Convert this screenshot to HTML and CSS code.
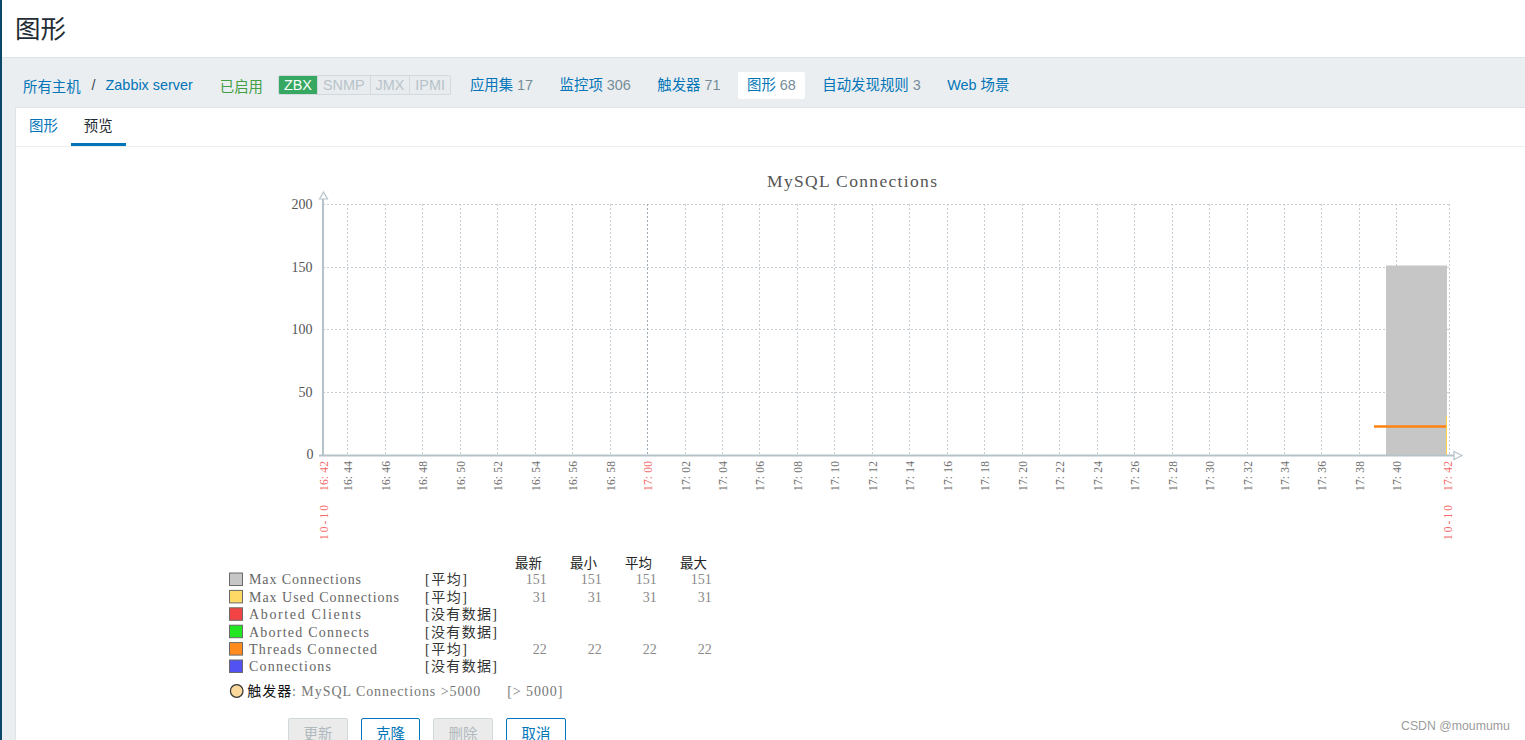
FILE: index.html
```html
<!DOCTYPE html>
<html lang="zh-CN">
<head>
<meta charset="utf-8">
<title>图形</title>
<link rel="stylesheet" href="styles.css">
</head>
<body>
<div class="sidebar-edge"></div>
<div class="main">
  <header class="page-header"><h1>图形</h1></header>
  <nav class="host-nav">
    <ul class="breadcrumbs">
      <li><a>所有主机</a></li>
      <li class="sep">/</li>
      <li><a>Zabbix server</a></li>
    </ul>
    <span class="status-on">已启用</span>
    <span class="avail"><span class="av av-on">ZBX</span><span class="av">SNMP</span><span class="av">JMX</span><span class="av">IPMI</span></span>
    <ul class="host-links">
      <li><a>应用集</a> <span class="cnt">17</span></li>
      <li><a>监控项</a> <span class="cnt">306</span></li>
      <li><a>触发器</a> <span class="cnt">71</span></li>
      <li class="current"><a>图形</a> <span class="cnt">68</span></li>
      <li><a>自动发现规则</a> <span class="cnt">3</span></li>
      <li><a>Web 场景</a></li>
    </ul>
  </nav>
  <div class="content">
    <ul class="tabs">
      <li><a>图形</a></li>
      <li class="active">预览</li>
    </ul>
    <div class="preview">
      <svg class="graph" width="1260" height="550" viewBox="220 160 1260 550" xmlns="http://www.w3.org/2000/svg">
        <text class="g-title" x="767" y="187" textLength="170" lengthAdjust="spacing">MySQL Connections</text>

        <g class="grid">
          <line x1="323" y1="204.5" x2="1449" y2="204.5"/>
          <line x1="323" y1="267.5" x2="1449" y2="267.5"/>
          <line x1="323" y1="329.5" x2="1449" y2="329.5"/>
          <line x1="323" y1="392.5" x2="1449" y2="392.5"/>
          <line x1="1449.5" y1="204" x2="1449.5" y2="455"/>
          <line x1="347.5" y1="204" x2="347.5" y2="455"/>
          <line x1="385.5" y1="204" x2="385.5" y2="455"/>
          <line x1="422.5" y1="204" x2="422.5" y2="455"/>
          <line x1="460.5" y1="204" x2="460.5" y2="455"/>
          <line x1="497.5" y1="204" x2="497.5" y2="455"/>
          <line x1="535.5" y1="204" x2="535.5" y2="455"/>
          <line x1="572.5" y1="204" x2="572.5" y2="455"/>
          <line x1="610.5" y1="204" x2="610.5" y2="455"/>
          <line class="grid-major" x1="647.5" y1="204" x2="647.5" y2="455"/>
          <line x1="685.5" y1="204" x2="685.5" y2="455"/>
          <line x1="722.5" y1="204" x2="722.5" y2="455"/>
          <line x1="759.5" y1="204" x2="759.5" y2="455"/>
          <line x1="797.5" y1="204" x2="797.5" y2="455"/>
          <line x1="834.5" y1="204" x2="834.5" y2="455"/>
          <line x1="872.5" y1="204" x2="872.5" y2="455"/>
          <line x1="909.5" y1="204" x2="909.5" y2="455"/>
          <line x1="947.5" y1="204" x2="947.5" y2="455"/>
          <line x1="984.5" y1="204" x2="984.5" y2="455"/>
          <line x1="1022.5" y1="204" x2="1022.5" y2="455"/>
          <line x1="1059.5" y1="204" x2="1059.5" y2="455"/>
          <line x1="1097.5" y1="204" x2="1097.5" y2="455"/>
          <line x1="1134.5" y1="204" x2="1134.5" y2="455"/>
          <line x1="1172.5" y1="204" x2="1172.5" y2="455"/>
          <line x1="1209.5" y1="204" x2="1209.5" y2="455"/>
          <line x1="1247.5" y1="204" x2="1247.5" y2="455"/>
          <line x1="1284.5" y1="204" x2="1284.5" y2="455"/>
          <line x1="1321.5" y1="204" x2="1321.5" y2="455"/>
          <line x1="1359.5" y1="204" x2="1359.5" y2="455"/>
          <line x1="1396.5" y1="204" x2="1396.5" y2="455"/>
        </g>

        <rect class="s-maxconn" x="1386" y="265.5" width="61" height="189.5"/>
        <line class="s-threads" x1="1374" y1="426.5" x2="1447" y2="426.5"/>
        <line class="s-maxused" x1="1446.5" y1="416" x2="1446.5" y2="455"/>

        <g class="axes">
          <line x1="323" y1="198" x2="323" y2="456"/>
          <line x1="319" y1="455.5" x2="1454" y2="455.5"/>
          <polygon class="arrow" points="323.5,192 319.5,199 327.5,199"/>
          <polygon class="arrow" points="1462,455.5 1454,451.5 1454,459.5"/>
        </g>

        <g class="yl">
          <text x="291.5" y="209">200</text>
          <text x="291.5" y="272">150</text>
          <text x="291.5" y="334">100</text>
          <text x="298.5" y="396.5">50</text>
          <text x="306.5" y="459">0</text>
        </g>

        <g class="xl">
          <text transform="translate(351.5,491) rotate(-90)" textLength="30">16: 44</text>
          <text transform="translate(389.5,491) rotate(-90)" textLength="30">16: 46</text>
          <text transform="translate(426.5,491) rotate(-90)" textLength="30">16: 48</text>
          <text transform="translate(464.5,491) rotate(-90)" textLength="30">16: 50</text>
          <text transform="translate(501.5,491) rotate(-90)" textLength="30">16: 52</text>
          <text transform="translate(539.5,491) rotate(-90)" textLength="30">16: 54</text>
          <text transform="translate(576.5,491) rotate(-90)" textLength="30">16: 56</text>
          <text transform="translate(614.5,491) rotate(-90)" textLength="30">16: 58</text>
          <text class="xl-red" transform="translate(651.5,491) rotate(-90)" textLength="30">17: 00</text>
          <text transform="translate(689.5,491) rotate(-90)" textLength="30">17: 02</text>
          <text transform="translate(726.5,491) rotate(-90)" textLength="30">17: 04</text>
          <text transform="translate(763.5,491) rotate(-90)" textLength="30">17: 06</text>
          <text transform="translate(801.5,491) rotate(-90)" textLength="30">17: 08</text>
          <text transform="translate(838.5,491) rotate(-90)" textLength="30">17: 10</text>
          <text transform="translate(876.5,491) rotate(-90)" textLength="30">17: 12</text>
          <text transform="translate(913.5,491) rotate(-90)" textLength="30">17: 14</text>
          <text transform="translate(951.5,491) rotate(-90)" textLength="30">17: 16</text>
          <text transform="translate(988.5,491) rotate(-90)" textLength="30">17: 18</text>
          <text transform="translate(1026.5,491) rotate(-90)" textLength="30">17: 20</text>
          <text transform="translate(1063.5,491) rotate(-90)" textLength="30">17: 22</text>
          <text transform="translate(1101.5,491) rotate(-90)" textLength="30">17: 24</text>
          <text transform="translate(1138.5,491) rotate(-90)" textLength="30">17: 26</text>
          <text transform="translate(1176.5,491) rotate(-90)" textLength="30">17: 28</text>
          <text transform="translate(1213.5,491) rotate(-90)" textLength="30">17: 30</text>
          <text transform="translate(1251.5,491) rotate(-90)" textLength="30">17: 32</text>
          <text transform="translate(1288.5,491) rotate(-90)" textLength="30">17: 34</text>
          <text transform="translate(1325.5,491) rotate(-90)" textLength="30">17: 36</text>
          <text transform="translate(1363.5,491) rotate(-90)" textLength="30">17: 38</text>
          <text transform="translate(1400.5,491) rotate(-90)" textLength="30">17: 40</text>
          <text class="xl-red" transform="translate(327.5,491) rotate(-90)" textLength="30">16: 42</text>
          <text class="xl-red" transform="translate(327.5,540) rotate(-90)" textLength="35">10-10</text>
          <text class="xl-red" transform="translate(1451.5,491) rotate(-90)" textLength="30">17: 42</text>
          <text class="xl-red" transform="translate(1451.5,540) rotate(-90)" textLength="35">10-10</text>
        </g>

        <g class="lg-head">
          <text x="515" y="567.5">最新</text>
          <text x="570" y="567.5">最小</text>
          <text x="625" y="567.5">平均</text>
          <text x="680" y="567.5">最大</text>
        </g>

        <g class="lg-box">
          <rect class="c-gray" x="229.5" y="573" width="13" height="12.5"/>
          <rect class="c-yellow" x="229.5" y="590.4" width="13" height="12.5"/>
          <rect class="c-red" x="229.5" y="607.8" width="13" height="12.5"/>
          <rect class="c-green" x="229.5" y="625.2" width="13" height="12.5"/>
          <rect class="c-orange" x="229.5" y="642.6" width="13" height="12.5"/>
          <rect class="c-blue" x="229.5" y="660" width="13" height="12.5"/>
        </g>

        <g class="lg-name">
          <text x="249" y="584.3" textLength="112">Max Connections</text>
          <text x="249" y="601.7" textLength="150">Max Used Connections</text>
          <text x="249" y="619.1" textLength="112">Aborted Clients</text>
          <text x="249" y="636.5" textLength="120">Aborted Connects</text>
          <text x="249" y="653.9" textLength="128">Threads Connected</text>
          <text x="249" y="671.3" textLength="82">Connections</text>
        </g>

        <g class="lg-func">
          <text x="425" y="584.3" textLength="42">[平均]</text>
          <text x="425" y="601.7" textLength="42">[平均]</text>
          <text x="425" y="619.1" textLength="72">[没有数据]</text>
          <text x="425" y="636.5" textLength="72">[没有数据]</text>
          <text x="425" y="653.9" textLength="42">[平均]</text>
          <text x="425" y="671.3" textLength="72">[没有数据]</text>
        </g>

        <g class="lg-val">
          <text x="546.7" y="584.3">151</text>
          <text x="601.7" y="584.3">151</text>
          <text x="656.7" y="584.3">151</text>
          <text x="711.7" y="584.3">151</text>
          <text x="546.7" y="601.7">31</text>
          <text x="601.7" y="601.7">31</text>
          <text x="656.7" y="601.7">31</text>
          <text x="711.7" y="601.7">31</text>
          <text x="546.7" y="653.9">22</text>
          <text x="601.7" y="653.9">22</text>
          <text x="656.7" y="653.9">22</text>
          <text x="711.7" y="653.9">22</text>
        </g>

        <circle class="trig-dot" cx="236.7" cy="691" r="6.3"/>
        <text class="lg-trig" x="247.3" y="695.5" textLength="233"><tspan class="lg-trig-label">触发器</tspan>: MySQL Connections &gt;5000</text>
        <text class="lg-trig" x="507.3" y="695.5" textLength="55">[&gt; 5000]</text>
      </svg>
    </div>
    <div class="form-buttons">
      <button class="btn" disabled>更新</button>
      <button class="btn btn-alt narrow">克隆</button>
      <button class="btn" disabled>删除</button>
      <button class="btn btn-alt">取消</button>
    </div>
  </div>
</div>
<div class="watermark">CSDN @moumumu</div>
</body>
</html>
```

FILE: styles.css
```css
html, body {
  margin: 0;
  height: 100%;
  overflow: hidden;
}

body {
  display: flex;
  background: #ebeef0;
  font-family: "Liberation Sans", "Noto Sans CJK SC", Arial, sans-serif;
  font-size: 14.4px;
  color: #1f2c33;
}

a {
  color: #0275b8;
  text-decoration: none;
}

ul {
  list-style: none;
  margin: 0;
  padding: 0;
}

.sidebar-edge {
  flex: none;
  width: 2px;
  background: #0b466b;
}

.main {
  flex: 1;
  min-width: 0;
  display: flex;
  flex-direction: column;
}

/* header */
.page-header {
  flex: none;
  height: 58px;
  box-sizing: border-box;
  background: #fff;
  border-bottom: 1px solid #dfe4e7;
  padding: 2px 0 0 13px;
}

.page-header h1 {
  margin: 0;
  font-size: 25.5px;
  font-weight: normal;
  line-height: 55px;
  color: #1f2c33;
}

/* host navigation */
.host-nav {
  flex: none;
  height: 49px;
  box-sizing: border-box;
  padding: 5px 0 0 21px;
  display: flex;
  align-items: center;
  white-space: nowrap;
}

.breadcrumbs {
  display: flex;
  align-items: center;
}

.breadcrumbs .sep {
  margin: 0 10px 0 11px;
  color: #3b4a52;
}

.status-on {
  margin-left: 27px;
  color: #429e47;
}

.avail {
  margin-left: 15px;
  display: inline-flex;
  height: 20px;
  border: 1px solid #d3dadf;
  border-radius: 2px;
  box-sizing: border-box;
  overflow: hidden;
}

.av {
  padding: 0 5px;
  line-height: 18px;
  color: #b7c3ca;
  background: #e9ecee;
  border-left: 1px solid #d3dadf;
}

.av-on {
  border-left: none;
  background: #37a862;
  color: #fff;
}

.host-links {
  margin-left: 10px;
  display: flex;
  align-items: center;
}

.host-links li {
  padding: 0 9px;
  height: 27px;
  line-height: 27px;
  border-radius: 2px;
}

.host-links li + li {
  margin-left: 8.5px;
}

.host-links li.current {
  background: #fff;
}

.cnt {
  color: #768d99;
}

/* content box */
.content {
  flex: 1;
  margin-left: 13px;
  background: #fff;
  border-top: 1px solid #dfe4e7;
  border-left: 1px solid #dfe4e7;
}

.tabs {
  display: flex;
  height: 39px;
  box-sizing: border-box;
  border-bottom: 1px solid #ebeef0;
}

.tabs li {
  height: 38px;
  box-sizing: border-box;
  padding: 8px 13px 0;
  line-height: 20px;
  border-bottom: 3px solid transparent;
}

.tabs li.active {
  border-bottom-color: #0275b8;
  color: #1f2c33;
}

.preview {
  padding-top: 13px;
}

.graph {
  display: block;
  margin-left: 204px;
}

/* graph styles */
.g-title {
  font-family: "Liberation Serif", serif;
  font-size: 17.5px;
  fill: #555;
}

.grid line {
  stroke: #c6ced3;
  stroke-width: 1;
  stroke-dasharray: 2 2;
}

.grid .grid-major {
  stroke: #9eaab2;
}

.s-maxconn {
  fill: #c6c6c6;
}

.s-threads {
  stroke: #ff8214;
  stroke-width: 2.5;
}

.s-maxused {
  stroke: #ffd24a;
  stroke-width: 1;
}

.axes line {
  stroke: #b6c2ca;
  stroke-width: 2;
}

.axes .arrow {
  fill: #fff;
  stroke: #b6c2ca;
  stroke-width: 1.2;
}

.yl text {
  font-family: "Liberation Serif", serif;
  font-size: 14px;
  fill: #555;
}

.xl text {
  font-family: "Liberation Serif", serif;
  font-size: 11.5px;
  fill: #6e6e6e;
}

.xl .xl-red {
  fill: #f36a6a;
}

.lg-head text {
  font-family: "Noto Sans CJK SC", sans-serif;
  font-size: 13.5px;
  font-weight: normal;
  fill: #222;
}

.lg-box rect {
  stroke: #6a6a6a;
  stroke-width: 1;
}

.c-gray { fill: #c6c6c6; }
.c-yellow { fill: #ffd966; }
.c-red { fill: #f24444; }
.c-green { fill: #22e622; }
.c-orange { fill: #ff8a1e; }
.c-blue { fill: #5252f2; }

.lg-name text {
  font-family: "Liberation Serif", serif;
  font-size: 14px;
  fill: #666;
}

.lg-func text {
  font-family: "Liberation Serif", "Noto Sans CJK SC", serif;
  font-size: 14px;
  fill: #333;
}

.lg-val text {
  font-family: "Liberation Serif", serif;
  font-size: 14px;
  fill: #8a8a8a;
  text-anchor: end;
}

.trig-dot {
  fill: #fbd89c;
  stroke: #333;
  stroke-width: 1.2;
}

.lg-trig {
  font-family: "Liberation Serif", "Noto Sans CJK SC", serif;
  font-size: 14px;
  fill: #777;
}

.lg-trig-label {
  font-family: "Noto Sans CJK SC", sans-serif;
  fill: #111;
}

/* buttons */
.form-buttons {
  display: flex;
  gap: 13px;
  margin: 8px 0 0 272px;
}

.btn {
  width: 60px;
  height: 29px;
  padding: 0;
  box-sizing: border-box;
  font-family: "Liberation Sans", "Noto Sans CJK SC", sans-serif;
  font-size: 14.4px;
  border: 1px solid #d2d9dd;
  border-radius: 2px;
  background: #ebebeb;
  color: #b0b9be;
}

.btn-alt {
  background: #fff;
  border-color: #0275b8;
  color: #0275b8;
}

.btn.narrow {
  width: 59px;
}

.watermark {
  position: absolute;
  left: 1401px;
  top: 718px;
  font-family: "Liberation Sans", Arial, sans-serif;
  font-size: 12.3px;
  line-height: 16px;
  color: #9c9c9c;
}
```
